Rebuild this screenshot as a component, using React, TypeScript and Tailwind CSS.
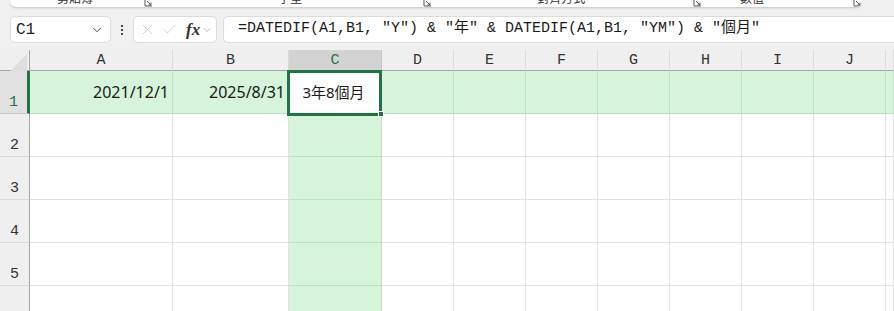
import { ChevronDown, Check, X } from "lucide-react";

const cols = ["A", "B", "C", "D", "E", "F", "G", "H", "I", "J", ""];

function Launcher() {
  return (
    <svg width="9" height="9" viewBox="0 0 9 9" className="text-[#555]">
      <path d="M1 1v7h7" fill="none" stroke="currentColor" strokeWidth="1" />
      <path d="M3 3l4 4M4.5 7H7V4.5" fill="none" stroke="currentColor" strokeWidth="1" />
    </svg>
  );
}

function Ribbon() {
  return (
    <div className="h-[8px] pl-[10px] pr-[32px]">
      <div className="h-[7px] overflow-hidden rounded-b-[6px] bg-white shadow-[0_1px_2px_rgba(0,0,0,0.18)]">
        <div className="-mt-[9px] flex items-end text-[12px] leading-[16px] text-[#333]">
          <span className="ml-[47px] w-[88px]">剪貼簿</span>
          <Launcher />
          <span className="ml-[125px] w-[146px]">字型</span>
          <Launcher />
          <span className="ml-[105px] w-[157px]">對齊方式</span>
          <Launcher />
          <span className="ml-[38px] w-[114px]">數值</span>
          <Launcher />
        </div>
      </div>
    </div>
  );
}

function FormulaBar() {
  return (
    <div className="flex h-[42px] items-center pl-[10px] pt-[1px]">
      <div className="flex h-[27px] w-[101px] items-center justify-between rounded-[5px] border border-[#dcdcdc] bg-white pl-[5px] pr-[6px]">
        <span className="font-['Liberation_Mono',monospace] text-[16px] text-[#222]">C1</span>
        <ChevronDown size={14} strokeWidth={1.6} className="text-[#444]" />
      </div>
      <div className="flex w-[22px] flex-col items-center justify-center gap-[2px]">
        <span className="h-[2px] w-[2px] bg-[#444]" />
        <span className="h-[2px] w-[2px] bg-[#444]" />
        <span className="h-[2px] w-[2px] bg-[#444]" />
      </div>
      <div className="flex h-[27px] w-[84px] items-center rounded-[5px] border border-[#dcdcdc] bg-white pl-[5px]">
        <X size={17} strokeWidth={1.1} className="text-[#c4c4c4]" />
        <Check size={17} strokeWidth={1.1} className="ml-[5px] text-[#c4c4c4]" />
        <span className="ml-[8px] font-['Liberation_Serif',serif] text-[17px] font-bold italic text-[#333]">fx</span>
        <ChevronDown size={12} strokeWidth={1.4} className="ml-[1px] text-[#999]" />
      </div>
      <div className="ml-[6px] flex h-[27px] flex-1 items-center rounded-l-[5px] border border-r-0 border-[#dcdcdc] bg-white pl-[14px] font-['Liberation_Mono','Noto_Sans_CJK_TC',monospace] text-[15px] text-[#1a1a1a] whitespace-pre">
        =DATEDIF(A1,B1, "Y") &amp; "年" &amp; DATEDIF(A1,B1, "YM") &amp; "個月"
      </div>
    </div>
  );
}

export default function App() {
  const rows = [1, 2, 3, 4, 5, 6];
  const grid =
    "grid grid-cols-[30px_143px_116px_93px_72px_72px_72px_72px_72px_72px_72px_1fr]";

  return (
    <div className="h-[311px] w-[894px] overflow-hidden bg-[#f0f0f0] font-['Noto_Sans','Noto_Sans_CJK_TC',sans-serif]">
      <Ribbon />
      <FormulaBar />

      {/* column headers */}
      <div className={`${grid} h-[21px] border-b border-[#a6a6a6] bg-[#efefef]`}>
        <div className="flex items-end justify-end border-r border-[#a6a6a6] pb-[2px] pr-[2px]">
          <svg width="17" height="17" viewBox="0 0 17 17">
            <path d="M17 0V17H0Z" fill="#dedede" />
          </svg>
        </div>
        {cols.map((c) => (
          <div
            key={c || "k"}
            className={`flex items-center justify-center border-r font-['Liberation_Mono',monospace] text-[15px] ${
              c === "C" ? "border-[#c6c6c6] bg-[#d3d3d3] text-[#217346]" : "border-[#dadada] text-[#333]"
            }`}
          >
            {c}
          </div>
        ))}
      </div>

      {rows.map((r) => (
        <div key={r} className={`${grid} h-[43px]`}>
          <div
            className={`flex items-end justify-center border-b pb-[1px] font-['Liberation_Mono',monospace] text-[15px] leading-[18px] ${
              r === 1
                ? "border-b-[#c9c9c9] border-r-[3px] border-r-[#217346] bg-[#e1e1e1] text-[#217346]"
                : "border-b-[#dadada] border-r border-r-[#a6a6a6] bg-[#efefef] text-[#333]"
            }`}
          >
            {r}
          </div>
          {cols.map((c) => {
            const green = r === 1 || c === "C";
            return (
              <div
                key={c || "k"}
                className={`relative flex items-center border-b border-r text-[16px] text-[#1a1a1a] ${
                  green ? "border-[#bfe0c4] bg-[#d5f4d9]" : "border-[#e1e1e1] bg-white"
                } ${r === 1 && c === "C" ? "z-10" : ""} ${
                  r === 1 && (c === "A" || c === "B") ? "justify-end pr-[3px]" : "justify-center"
                }`}
              >
                {r === 1 && c === "A" && "2021/12/1"}
                {r === 1 && c === "B" && "2025/8/31"}
                {r === 1 && c === "C" && (
                  <>
                    <div className="absolute -left-[2px] -top-[1px] h-[46px] w-[95px] border-[3px] border-[#217346] bg-white" />
                    <div className="absolute -bottom-[4px] -right-[3px] h-[6px] w-[6px] border border-white bg-[#217346]" />
                    <span className="relative -ml-[3px] text-[15px]">3年8個月</span>
                  </>
                )}
              </div>
            );
          })}
        </div>
      ))}
    </div>
  );
}
